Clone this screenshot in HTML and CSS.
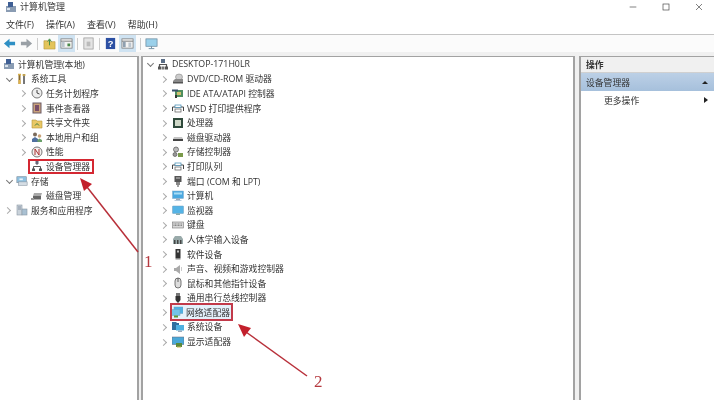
FILE: index.html
```html
<!DOCTYPE html>
<html lang="zh-CN">
<head>
<meta charset="utf-8">
<title>计算机管理</title>
<link rel="stylesheet" href="styles.css">
</head>
<body>
<svg class="defs" width="0" height="0">
  <symbol id="pc" viewBox="0 0 12 12"><path d="M6 1v4M2.500 10V6.500h7V10" fill="none" stroke="#555" stroke-width="1.200"/><rect x="4" y="1" width="4" height="4" fill="#5a6d86"/><rect x="1" y="8.500" width="3" height="3" fill="#555"/><rect x="8" y="8.500" width="3" height="3" fill="#555"/><rect x="4.500" y="8.500" width="3" height="3" fill="#777"/></symbol>
  <symbol id="cm" viewBox="0 0 12 12"><rect x="1" y="5" width="10" height="6" fill="#8a9cb3"/><rect x="3" y="1" width="5" height="5" fill="#3f5f95"/><rect x="2" y="7" width="3" height="2" fill="#d9e3ee"/></symbol>
  <symbol id="tools" viewBox="0 0 12 12"><path d="M3.500 1v10" stroke="#8a6a2c" stroke-width="2"/><path d="M8 1v10" stroke="#777" stroke-width="2"/><path d="M2 1.500h3M6.500 2h3" stroke="#d8b048" stroke-width="1.500"/><path d="M3.500 7v4" stroke="#e0b24a" stroke-width="2"/></symbol>
  <symbol id="clock" viewBox="0 0 12 12"><circle cx="6" cy="6" r="5" fill="#eee" stroke="#777"/><path d="M6 3v3l2.500 1" fill="none" stroke="#444"/></symbol>
  <symbol id="log" viewBox="0 0 12 12"><rect x="2" y="1" width="8" height="10" fill="#c9a27a" stroke="#6b5a66"/><rect x="4" y="3" width="4" height="6" fill="#7a4f68"/></symbol>
  <symbol id="share" viewBox="0 0 12 12"><path d="M1 3h4l1 1h5v7H1z" fill="#e9c865" stroke="#b7953a" stroke-width=".6"/><path d="M4 8.500l2-2 2 2" fill="none" stroke="#3d7a3d"/></symbol>
  <symbol id="users" viewBox="0 0 12 12"><circle cx="4" cy="3.500" r="2" fill="#7a6a5a"/><path d="M1 11V8l3-2 3 2v3z" fill="#4f6f9f"/><circle cx="8.500" cy="5" r="1.800" fill="#c9a27a"/><path d="M6.500 11V9l2-1.500L11 9v2z" fill="#6aa06a"/></symbol>
  <symbol id="perf" viewBox="0 0 12 12"><circle cx="6" cy="6" r="5" fill="#f4f0ee" stroke="#777"/><path d="M4 9V3l4 6V3" fill="none" stroke="#a33" stroke-width="1"/></symbol>
  <symbol id="dev" viewBox="0 0 12 12"><path d="M6 2v3M2.500 9V6.500h7V9" fill="none" stroke="#555"/><rect x="4.500" y="1" width="3" height="3" fill="#667"/><rect x="1" y="8.500" width="3" height="2.500" fill="#555"/><rect x="8" y="8.500" width="3" height="2.500" fill="#555"/></symbol>
  <symbol id="store" viewBox="0 0 14 12"><rect x="1" y="1" width="11" height="7" fill="#8fc1e0" stroke="#7a8a99" stroke-width=".7"/><rect x="3" y="7" width="10" height="4" fill="#d5dde4" stroke="#8a97a3" stroke-width=".7"/><rect x="4" y="3" width="4" height="2" fill="#eaf3f9"/></symbol>
  <symbol id="disk" viewBox="0 0 12 12"><path d="M3 3h8L10 6H2z" fill="#a9a9a9"/><rect x="2" y="6" width="8" height="3.500" fill="#666"/><rect x="0" y="8" width="3" height="2" fill="#999"/></symbol>
  <symbol id="svc" viewBox="0 0 12 12"><rect x="1" y="1" width="5" height="10" fill="#c9d2da" stroke="#8a97a3" stroke-width=".6"/><rect x="6" y="5" width="5" height="6" fill="#a9c0d2" stroke="#8a97a3" stroke-width=".6"/><path d="M2 3h3M2 5h3" stroke="#6a7a8a" stroke-width=".7"/></symbol>
  <symbol id="dvd" viewBox="0 0 12 12"><ellipse cx="7" cy="4" rx="3.500" ry="3" fill="#ccc" stroke="#888" stroke-width=".6"/><path d="M1 8l2-2h8v3H1z" fill="#8a8a8a"/><rect x="1" y="9" width="10" height="1.500" fill="#555"/></symbol>
  <symbol id="ide" viewBox="0 0 12 12"><rect x="3" y="3" width="8" height="7" fill="#4f8f5f"/><rect x="5" y="5" width="4" height="3" fill="#d0c070"/><rect x="0" y="2.500" width="6" height="2" fill="#39506a"/><rect x="3" y="8" width="2" height="3" fill="#333"/></symbol>
  <symbol id="print" viewBox="0 0 12 12"><path d="M.5 9V5h11v4" fill="none" stroke="#444"/><rect x="3" y="3" width="6" height="2.500" fill="#fff" stroke="#3a86b0" stroke-width=".7"/><rect x="3" y="7" width="6" height="3" fill="#fff" stroke="#555" stroke-width=".7"/></symbol>
  <symbol id="cpu" viewBox="0 0 12 12"><rect x="1" y="1" width="10" height="10" fill="#2f4a3c"/><rect x="3" y="3" width="6" height="6" fill="#cfd8c8"/></symbol>
  <symbol id="drive" viewBox="0 0 12 12"><path d="M2 6h8l1 2H1z" fill="#c4c4c4"/><rect x="1" y="8" width="10" height="2" fill="#444"/></symbol>
  <symbol id="ctrl" viewBox="0 0 12 12"><circle cx="4" cy="3.500" r="2.500" fill="#bbb" stroke="#555" stroke-width=".7"/><circle cx="3" cy="8.500" r="2" fill="#999" stroke="#555" stroke-width=".7"/><rect x="6" y="7" width="5" height="4" fill="#7a9a4a"/></symbol>
  <symbol id="port" viewBox="0 0 12 12"><rect x="2.500" y="1" width="7" height="6" fill="#555"/><rect x="4" y="7" width="4" height="3" fill="#888"/><path d="M6 10v2" stroke="#444"/><path d="M4 3h4" stroke="#ccc"/></symbol>
  <symbol id="comp" viewBox="0 0 12 12"><rect x=".5" y="1" width="11" height="7.500" fill="#4aa8e0" stroke="#7fa8c8" stroke-width=".5"/><path d="M2 2.500h8v2H2z" fill="#a8dcf5"/><rect x="4" y="8.500" width="4" height="1.500" fill="#9ab"/><rect x="2.500" y="10" width="7" height="1" fill="#bcd"/></symbol>
  <symbol id="mon" viewBox="0 0 12 12"><rect x=".5" y="2" width="11" height="7.500" rx=".5" fill="#55b4e6" stroke="#6f9dbd" stroke-width=".5"/><rect x="4" y="9.500" width="4" height="1.500" fill="#8aa"/></symbol>
  <symbol id="kbd" viewBox="0 0 12 12"><rect x=".5" y="3" width="11" height="6" fill="#d8d8d8" stroke="#777" stroke-width=".6"/><path d="M1.500 5h9M1.500 6.500h9" stroke="#666" stroke-width=".7" stroke-dasharray="1 .5"/></symbol>
  <symbol id="hid" viewBox="0 0 12 12"><path d="M1 6l2-3h6l2 3v5H1z" fill="#9aa"/><path d="M2 7h1.500v4H2zM5 7h1.500v4H5zM8 7h1.500v4H8z" fill="#444"/></symbol>
  <symbol id="soft" viewBox="0 0 12 12"><rect x="3.500" y="1" width="5" height="9" fill="#333"/><rect x="5" y="2.500" width="2" height="2" fill="#bbb"/><rect x="3.500" y="10" width="5" height="1.500" fill="#888"/></symbol>
  <symbol id="snd" viewBox="0 0 12 12"><path d="M2 5h2l4-3v9L4 8H2z" fill="#aaa"/><path d="M9.500 4v4" stroke="#ccc"/></symbol>
  <symbol id="mouse" viewBox="0 0 12 12"><rect x="3" y="1" width="6" height="10" rx="3" fill="#ddd" stroke="#555" stroke-width=".8"/><path d="M6 1v4" stroke="#444" stroke-width=".8"/></symbol>
  <symbol id="usb" viewBox="0 0 12 12"><rect x="4" y="1" width="4" height="3" fill="#777"/><path d="M3.500 4h5v4l-1.500 2h-2L3.500 8z" fill="#333"/><path d="M6 10v2" stroke="#444"/></symbol>
  <symbol id="net" viewBox="0 0 12 12"><rect x="3" y="1" width="9" height="6.500" fill="#4cb1e4" stroke="#6f9dbd" stroke-width=".5"/><rect x="0" y="3.500" width="9" height="6" fill="#72c4ea" stroke="#6f9dbd" stroke-width=".5"/><rect x="3" y="9.500" width="4" height="2" fill="#5a9a3a"/></symbol>
  <symbol id="sys" viewBox="0 0 12 12"><path d="M0 1h4l1 1h2v7H0z" fill="#2f6f9f"/><rect x="4" y="4" width="8" height="5.500" fill="#4fb0e0"/><rect x="6" y="9.500" width="4" height="1.500" fill="#9ab"/></symbol>
  <symbol id="disp" viewBox="0 0 12 12"><rect x="0" y="1" width="12" height="7.500" fill="#4aa8d8" stroke="#667" stroke-width=".5"/><rect x="4" y="7" width="6" height="4" fill="#5a8a3a"/><path d="M5 11h4" stroke="#c8b050"/></symbol>
</svg>

<div class="window">
  <header class="titlebar">
    <svg class="ico"><use href="#cm"/></svg>
    <span class="title">计算机管理</span>
    <span class="controls">
      <svg class="ctl" viewBox="0 0 12 12"><path d="M1 6h10" stroke="#444" fill="none"/></svg>
      <svg class="ctl" viewBox="0 0 12 12"><rect x="1.500" y="1.500" width="9" height="9" stroke="#444" fill="none"/></svg>
      <svg class="ctl" viewBox="0 0 12 12"><path d="M1.500 1.500l9 9M10.500 1.500l-9 9" stroke="#444" fill="none"/></svg>
    </span>
  </header>
  <nav class="menubar">
    <span>文件(F)</span><span>操作(A)</span><span>查看(V)</span><span>帮助(H)</span>
  </nav>
  <div class="toolbar">
    <svg class="tb" viewBox="0 0 14 14"><path d="M1 7l6-5v3h6v4H7v3z" fill="#2e8fc4"/></svg>
    <svg class="tb" viewBox="0 0 14 14"><path d="M13 7L7 2v3H1v4h6v3z" fill="#9aa0a6"/></svg>
    <i class="sep"></i>
    <svg class="tb nudge" viewBox="0 0 14 14"><path d="M1 4h4l1 1h7v8H1z" fill="#e3c45a" stroke="#b49538" stroke-width=".6"/><path d="M7 9V3M5 5l2-3 2 3" stroke="#3d8a3d" fill="none"/></svg>
    <span class="tb-on tight"><svg class="tb" viewBox="0 0 14 14"><rect x="1" y="2" width="12" height="10" fill="#f4f4f4" stroke="#777" stroke-width=".8"/><path d="M1 4.500h12" stroke="#777"/><rect x="2" y="5" width="3" height="6" fill="#bcc6cf"/><rect x="8" y="7" width="3" height="3" fill="#4a8a4a"/></svg></span>
    <i class="sep tight"></i>
    <svg class="tb" viewBox="0 0 14 14"><rect x="2" y="1" width="10" height="12" fill="#e4e4e4" stroke="#999" stroke-width=".8"/><rect x="5" y="5" width="4" height="5" fill="#bbb"/></svg>
    <i class="sep"></i>
    <svg class="tb" viewBox="0 0 14 14"><rect x="2" y="1" width="10" height="12" fill="#2b4fa3"/><text class="help" x="7" y="11" text-anchor="middle">?</text></svg>
    <span class="tb-on tight"><svg class="tb" viewBox="0 0 14 14"><rect x="1" y="2" width="12" height="10" fill="#f4f4f4" stroke="#777" stroke-width=".8"/><path d="M1 4.500h12" stroke="#777"/><rect x="2" y="5" width="3" height="6" fill="#8fa0b0"/><rect x="8" y="6" width="3" height="5" fill="#bcc6cf"/></svg></span>
    <i class="sep"></i>
    <svg class="tb" viewBox="0 0 14 14"><rect x="1" y="2" width="12" height="8" fill="#9ad0ea" stroke="#6b8ba0" stroke-width=".8"/><path d="M7 10v2M4 12.500h6" stroke="#6b8ba0"/></svg>
  </div>
  <main class="panes">
    <section class="pane tree-left">
      <ul class="tree">
        <li class="l0"><b></b><svg class="ico"><use href="#cm"/></svg>计算机管理(本地)</li>
        <li class="l1"><b class="open"></b><svg class="ico"><use href="#tools"/></svg>系统工具</li>
        <li class="l2"><b class="shut"></b><svg class="ico"><use href="#clock"/></svg>任务计划程序</li>
        <li class="l2"><b class="shut"></b><svg class="ico"><use href="#log"/></svg>事件查看器</li>
        <li class="l2"><b class="shut"></b><svg class="ico"><use href="#share"/></svg>共享文件夹</li>
        <li class="l2"><b class="shut"></b><svg class="ico"><use href="#users"/></svg>本地用户和组</li>
        <li class="l2"><b class="shut"></b><svg class="ico"><use href="#perf"/></svg>性能</li>
        <li class="l2"><b></b><span class="mark mark-a"><svg class="ico"><use href="#dev"/></svg>设备管理器</span></li>
        <li class="l1"><b class="open"></b><svg class="ico"><use href="#store"/></svg>存储</li>
        <li class="l2"><b></b><svg class="ico"><use href="#disk"/></svg>磁盘管理</li>
        <li class="l1"><b class="shut"></b><svg class="ico"><use href="#svc"/></svg>服务和应用程序</li>
      </ul>
    </section>
    <section class="pane tree-main">
      <ul class="tree">
        <li class="m0"><b class="open"></b><svg class="ico"><use href="#pc"/></svg>DESKTOP-171H0LR</li>
        <li class="m1"><b class="shut"></b><svg class="ico"><use href="#dvd"/></svg>DVD/CD-ROM 驱动器</li>
        <li class="m1"><b class="shut"></b><svg class="ico"><use href="#ide"/></svg>IDE ATA/ATAPI 控制器</li>
        <li class="m1"><b class="shut"></b><svg class="ico"><use href="#print"/></svg>WSD 打印提供程序</li>
        <li class="m1"><b class="shut"></b><svg class="ico"><use href="#cpu"/></svg>处理器</li>
        <li class="m1"><b class="shut"></b><svg class="ico"><use href="#drive"/></svg>磁盘驱动器</li>
        <li class="m1"><b class="shut"></b><svg class="ico"><use href="#ctrl"/></svg>存储控制器</li>
        <li class="m1"><b class="shut"></b><svg class="ico"><use href="#print"/></svg>打印队列</li>
        <li class="m1"><b class="shut"></b><svg class="ico"><use href="#port"/></svg>端口 (COM 和 LPT)</li>
        <li class="m1"><b class="shut"></b><svg class="ico"><use href="#comp"/></svg>计算机</li>
        <li class="m1"><b class="shut"></b><svg class="ico"><use href="#mon"/></svg>监视器</li>
        <li class="m1"><b class="shut"></b><svg class="ico"><use href="#kbd"/></svg>键盘</li>
        <li class="m1"><b class="shut"></b><svg class="ico"><use href="#hid"/></svg>人体学输入设备</li>
        <li class="m1"><b class="shut"></b><svg class="ico"><use href="#soft"/></svg>软件设备</li>
        <li class="m1"><b class="shut"></b><svg class="ico"><use href="#snd"/></svg>声音、视频和游戏控制器</li>
        <li class="m1"><b class="shut"></b><svg class="ico"><use href="#mouse"/></svg>鼠标和其他指针设备</li>
        <li class="m1"><b class="shut"></b><svg class="ico"><use href="#usb"/></svg>通用串行总线控制器</li>
        <li class="m1"><b class="shut"></b><span class="mark mark-b"><svg class="ico"><use href="#net"/></svg>网络适配器</span></li>
        <li class="m1"><b class="shut"></b><svg class="ico"><use href="#sys"/></svg>系统设备</li>
        <li class="m1"><b class="shut"></b><svg class="ico"><use href="#disp"/></svg>显示适配器</li>
      </ul>
    </section>
    <aside class="pane actions">
      <h2 class="act-head">操作</h2>
      <div class="act-sel"><span>设备管理器</span><i class="up"></i></div>
      <div class="act-more"><span>更多操作</span><i class="right"></i></div>
    </aside>
  </main>
  <svg class="arrows" viewBox="0 0 714 400">
    <path d="M138 252L87 187" stroke="#b8303a" stroke-width="1.500" fill="none"/>
    <path d="M80 178l12 6-8 7z" fill="#c3202c"/>
    <path d="M307 376L246 332" stroke="#b8303a" stroke-width="1.500" fill="none"/>
    <path d="M238 324l13 4-7 9z" fill="#c3202c"/>
    <text class="num" x="144" y="267">1</text>
    <text class="num" x="314" y="387">2</text>
  </svg>
</div>
</body>
</html>
```
FILE: styles.css
```css
* { box-sizing: border-box; }
html, body { margin: 0; padding: 0; }
body {
  width: 714px;
  height: 400px;
  overflow: hidden;
  background: #fff;
  color: #333;
  font-family: "Open Sans", "Noto Sans CJK SC", "Liberation Sans", sans-serif;
  font-size: 8.8px;
}
.defs { position: absolute; }
.window { position: relative; width: 714px; height: 400px; display: flex; flex-direction: column; filter: blur(.35px); }
.ico { width: 12px; height: 12px; flex: none; margin-right: 3px; }

.titlebar { height: 15px; display: flex; align-items: center; padding: 0 0 2px 5px; font-size: 9px; }
.title { color: #333; }
.controls { margin-left: auto; display: flex; gap: 25px; padding-right: 11px; align-items: center; }
.ctl { width: 8px; height: 8px; }

.menubar { height: 20px; display: flex; gap: 12px; align-items: center; padding-left: 6px; border-bottom: 1px solid #c4c4c4; font-size: 9px; }

.toolbar { height: 17px; display: flex; align-items: center; padding-left: 3px; gap: 4px; background: #fbfbfb; }
.tb { width: 13px; height: 13px; display: block; }
.tb-on { background: #cfe3f2; padding: 2px; height: 17px; display: block; }
.sep { width: 1px; height: 12px; background: #ccc; }
.nudge { margin-left: 1px; }
.tight { margin-left: -2px; }
.help { font: bold 10px "Liberation Sans", sans-serif; fill: #fff; }

.panes { flex: 1; min-height: 0; display: flex; gap: 2px; background: #f0f0f0; padding-top: 4px; }
.pane { background: #fff; border: 1px solid #a2a2a2; border-width: 1px 1px 0 1px; border-left-width: 0; }
.tree-left { width: 139px; border-right-width: 2px; }
.tree-main { flex: 1; border-left-width: 2px; border-right-width: 2px; }
.actions { width: 135px; border-left-width: 2px; border-right-width: 0; margin-left: 2px; }

.tree { list-style: none; margin: 0; padding: 0; }
.tree li { height: 14.6px; display: flex; align-items: center; white-space: nowrap; }
.tree b { width: 8px; height: 8px; flex: none; display: block; margin-right: 3px; position: relative; }
.tree b.open::after, .tree b.shut::after {
  content: ""; position: absolute; width: 4px; height: 4px;
  border: solid #777; border-width: 0 1px 1px 0;
}
.tree b.open::after { left: 2px; top: 1px; transform: rotate(45deg); }
.tree b.shut::after { left: 0; top: 2px; transform: rotate(-45deg); border-color: #aaa; }

.l0 { padding-left: 3px; }
.l0 b { display: none; }
.l1 { padding-left: 5px; }
.l2 { padding-left: 20px; }
.m0 { padding-left: 3px; }
.m1 { padding-left: 18px; }

.mark { display: inline-flex; align-items: center; height: 13px; padding: 0 1px; outline: 2px solid #d42832; outline-offset: -1px; }
.mark-a { padding-left: 2px; padding-right: 3px; margin-left: -2px; }
.mark-b { height: 16px; background: #e4f0fa; padding-left: 0; padding-right: 2px; outline-color: #c23a4a; margin-left: -1px; }

.act-head { margin: 0; height: 16px; line-height: 16px; padding-left: 5px; font-size: 8.8px; font-weight: 700; background: #f0f0f0; border-bottom: 1px solid #d0d0d0; }
.act-sel { height: 18px; display: flex; align-items: center; justify-content: space-between; padding: 0 6px 0 5px; background: linear-gradient(#bcd0e6, #a6c0dc); }
.act-more { height: 18px; display: flex; align-items: center; justify-content: space-between; padding: 0 6px 0 23px; }
.up { width: 0; height: 0; border: 3px solid transparent; border-top: 0; border-bottom: 3px solid #222; }
.right { width: 0; height: 0; border: 3px solid transparent; border-right: 0; border-left: 4px solid #222; }

.arrows { position: absolute; left: 0; top: 0; width: 714px; height: 400px; pointer-events: none; }
.num { font: 17px "Liberation Serif", serif; fill: #b5393f; }
```
